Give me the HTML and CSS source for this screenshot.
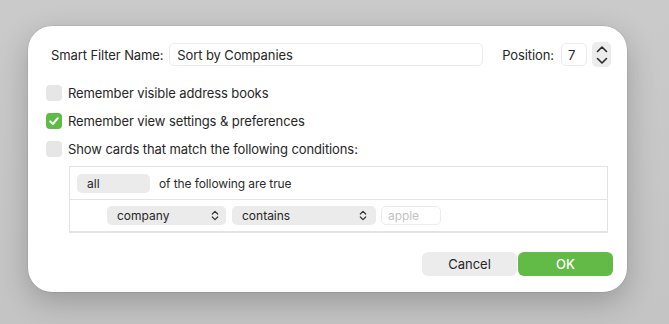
FILE: index.html
```html
<!DOCTYPE html>
<html>
<head>
<meta charset="utf-8">
<link rel="stylesheet" href="styles.css">
</head>
<body>
<div class="dialog">
  <div class="name-row">
    <span class="label name-label">Smart Filter Name:</span>
    <div class="field name-field">Sort by Companies</div>
    <span class="label pos-label">Position:</span>
    <div class="field pos-field">7</div>
    <div class="stepper">
      <svg width="12" height="22" viewBox="0 0 12 22"><path d="M1.5 7.5 L6 3 L10.5 7.5" fill="none" stroke="#2a2a2a" stroke-width="1.6" stroke-linecap="round" stroke-linejoin="round"/><path d="M1.5 14.5 L6 19 L10.5 14.5" fill="none" stroke="#2a2a2a" stroke-width="1.6" stroke-linecap="round" stroke-linejoin="round"/></svg>
    </div>
  </div>
  <div class="checks">
    <div class="check-row"><span class="box"></span><span class="label">Remember visible address books</span></div>
    <div class="check-row"><span class="box on"><svg width="16" height="16" viewBox="0 0 16 16"><path d="M4.2 8.4 L6.9 11 L11.8 5.2" fill="none" stroke="#fff" stroke-width="2" stroke-linecap="round" stroke-linejoin="round"/></svg></span><span class="label">Remember view settings &amp; preferences</span></div>
    <div class="check-row"><span class="box"></span><span class="label">Show cards that match the following conditions:</span></div>
  </div>
  <div class="conditions">
    <div class="cond-row first">
      <div class="popup all-popup">all</div>
      <span class="label small">of the following are true</span>
    </div>
    <div class="cond-row second">
      <div class="popup company-popup"><span>company</span>
        <svg class="chev" width="8" height="11" viewBox="0 0 8 11"><path d="M1.3 4 L4 1.3 L6.7 4 M1.3 7 L4 9.7 L6.7 7" fill="none" stroke="#333" stroke-width="1.2" stroke-linecap="round" stroke-linejoin="round"/></svg></div>
      <div class="popup contains-popup"><span>contains</span>
        <svg class="chev" width="8" height="11" viewBox="0 0 8 11"><path d="M1.3 4 L4 1.3 L6.7 4 M1.3 7 L4 9.7 L6.7 7" fill="none" stroke="#333" stroke-width="1.2" stroke-linecap="round" stroke-linejoin="round"/></svg></div>
      <div class="field apple-field">apple</div>
    </div>
  </div>
  <div class="buttons">
    <div class="btn cancel">Cancel</div>
    <div class="btn ok">OK</div>
  </div>
</div>
</body>
</html>
```

FILE: styles.css
```css
html, body {
  margin: 0;
  padding: 0;
}
body {
  background: linear-gradient(180deg, #cacaca 0%, #c4c4c4 100%);
  width: 669px;
  height: 324px;
  overflow: hidden;
  font-family: Inter, "Liberation Sans", sans-serif;
  color: #262626;
}
.dialog {
  box-sizing: border-box;
  margin: 26px 0 0 28px;
  width: 599px;
  height: 266px;
  background: #fff;
  border-radius: 24px;
  box-shadow: 0 10px 30px rgba(0,0,0,0.22), 0 0 0 0.5px rgba(0,0,0,0.12);
  padding: 17px 16px 16px 18px;
  display: flex;
  flex-direction: column;
}
.label {
  font-size: 13px;
  letter-spacing: -0.1px;
  white-space: nowrap;
}
.name-row {
  display: flex;
  align-items: center;
  height: 23px;
}
.name-label {
  margin-left: 5px;
}
.field {
  box-sizing: border-box;
  border: 1px solid #ececec;
  border-radius: 5px;
  height: 23px;
  display: flex;
  align-items: center;
  font-size: 13px;
  letter-spacing: -0.1px;
  background: #fff;
}
.name-field {
  margin-left: auto;
  width: 314px;
  padding-left: 7px;
}
.pos-label {
  margin-left: 19px;
}
.pos-field {
  margin-left: 7px;
  width: 26px;
  padding-left: 6px;
}
.stepper {
  margin-left: 5px;
  width: 19px;
  height: 25px;
  background: #ececec;
  border-radius: 5px;
  display: flex;
  align-items: center;
  justify-content: center;
}
.checks {
  margin-top: 19px;
  display: flex;
  flex-direction: column;
  gap: 12px;
}
.check-row {
  display: flex;
  align-items: center;
  height: 16px;
}
.box {
  width: 16px;
  height: 16px;
  border-radius: 4px;
  background: #e6e6e6;
  margin-right: 6px;
  display: flex;
}
.box.on {
  background: #5fba46;
}
.conditions {
  margin: 9px 3px 0 23px;
  border: 1px solid #e3e3e3;
  border-bottom: 2px solid #e3e3e3;
  display: flex;
  flex-direction: column;
}
.cond-row {
  display: flex;
  align-items: center;
}
.cond-row.first {
  height: 32px;
  padding-left: 7px;
  border-bottom: 1px solid #e3e3e3;
}
.cond-row.second {
  height: 31px;
  padding-left: 37px;
}
.popup {
  box-sizing: border-box;
  height: 19px;
  border-radius: 5px;
  background: #ebebeb;
  font-size: 12px;
  display: flex;
  align-items: center;
  padding-left: 10px;
}
.all-popup {
  width: 73px;
}
.small {
  font-size: 12px;
  margin-left: 9px;
  color: #2c2c2c;
}
.company-popup {
  width: 119px;
  justify-content: space-between;
  padding-right: 7px;
}
.contains-popup {
  width: 144px;
  margin-left: 6px;
  justify-content: space-between;
  padding-right: 9px;
}
.apple-field {
  margin-left: 5px;
  width: 60px;
  height: 19px;
  font-size: 12px;
  color: #c2c2c2;
  padding-left: 6px;
}
.buttons {
  margin-top: 19px;
  margin-right: -2px;
  display: flex;
  justify-content: flex-end;
  gap: 1px;
}
.btn {
  width: 95px;
  height: 24px;
  border-radius: 6px;
  font-size: 13px;
  display: flex;
  align-items: center;
  justify-content: center;
}
.cancel {
  background: #ececec;
  color: #262626;
}
.ok {
  background: #62bb47;
  color: #fff;
  font-weight: 500;
}
```
